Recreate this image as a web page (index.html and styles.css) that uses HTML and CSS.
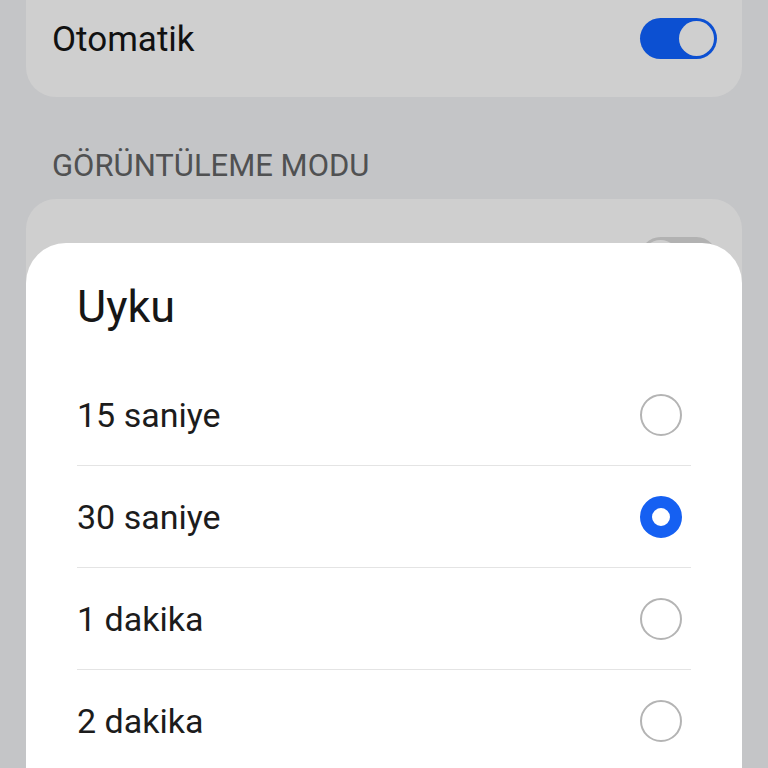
FILE: index.html
```html
<!DOCTYPE html>
<html>
<head>
  <link rel="stylesheet" href="styles.css">
</head>
<body>
  <div class="screen">
    <div class="card card-auto">
      <div class="row">
        <span class="label">Otomatik</span>
        <span class="switch on"><span class="knob"></span></span>
      </div>
    </div>

    <div class="section-title">GÖRÜNTÜLEME MODU</div>

    <div class="card card-mode">
      <div class="row">
        <span class="label">Karanlık mod</span>
        <span class="switch"><span class="knob"></span></span>
      </div>
    </div>
  </div>

  <div class="sheet">
    <h2 class="sheet-title">Uyku</h2>
    <ul class="options">
      <li class="option"><span>15 saniye</span><span class="radio"></span></li>
      <li class="option"><span>30 saniye</span><span class="radio checked"></span></li>
      <li class="option"><span>1 dakika</span><span class="radio"></span></li>
      <li class="option"><span>2 dakika</span><span class="radio"></span></li>
    </ul>
  </div>
</body>
</html>
```

FILE: styles.css
```css
html, body {
  height: 100%;
}

body {
  margin: 0;
  overflow: hidden;
  background: #c4c5c7;
  font-family: Roboto, "Noto Sans", sans-serif;
  color: #1c1c1c;
}

.screen {
  padding: 0 26px;
}

.card {
  background: #cfcfcf;
  border-radius: 30px;
  padding: 0 25px 0 26px;
  box-sizing: border-box;
}

.card-auto {
  margin-top: -30px;
  height: 127px;
  padding-top: 48px;
}

.card-mode {
  height: 160px;
  padding-top: 38px;
}

.row {
  display: flex;
  align-items: center;
  justify-content: space-between;
  height: 41px;
}

.label {
  font-size: 35px;
  line-height: 1;
  color: #111;
  padding-top: 2px;
}

.card-mode .label {
  visibility: hidden;
}

.switch {
  display: flex;
  align-items: center;
  width: 77px;
  height: 41px;
  border-radius: 21px;
  background: #b2b2b2;
  padding: 3px;
  box-sizing: border-box;
}

.switch .knob {
  width: 35px;
  height: 35px;
  border-radius: 50%;
  background: #cfcfcf;
}

.switch.on {
  background: #0c50d2;
  justify-content: flex-end;
}

.section-title {
  margin: 53px 0 18px;
  padding-left: 26px;
  font-size: 31px;
  line-height: 1;
  color: #505152;
}

/* bottom sheet dialog */
.sheet {
  position: absolute;
  top: 243px;
  left: 26px;
  right: 26px;
  bottom: 0;
  background: #fff;
  border-radius: 40px 40px 0 0;
  padding: 41px 51px 0;
  overflow: hidden;
}

.sheet-title {
  margin: 0 0 35px;
  font-size: 45px;
  line-height: 1;
  font-weight: 400;
  color: #161616;
}

.options {
  list-style: none;
  margin: 0;
  padding: 0;
}

.option {
  display: flex;
  align-items: center;
  justify-content: space-between;
  height: 101px;
  border-bottom: 1px solid #e4e4e4;
  font-size: 34px;
  color: #1c1c1c;
}

.option:last-child {
  border-bottom: none;
}

.radio {
  width: 42px;
  height: 42px;
  margin-right: 9px;
  border: 2px solid #b4b4b4;
  border-radius: 50%;
  box-sizing: border-box;
}

.radio.checked {
  border: 12px solid #1560f2;
}
```
